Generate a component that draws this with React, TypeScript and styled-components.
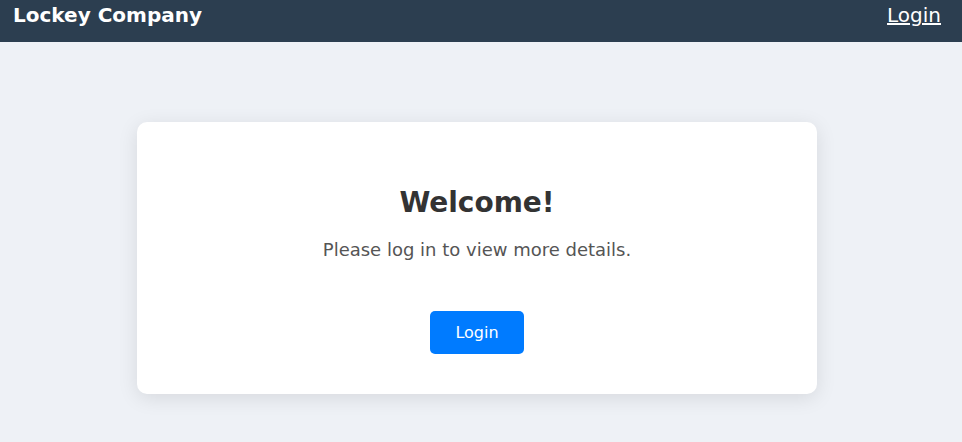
import React from "react";
import styled, { createGlobalStyle } from "styled-components";

const Global = createGlobalStyle`
  html, body { margin: 0; padding: 0; }
  body {
    background: #eef1f6;
    font-family: "DejaVu Sans", sans-serif;
    min-height: 442px;
  }
`;

const Header = styled.header`
  height: 42px;
  box-sizing: border-box;
  background: #2c3e50;
  padding: 3px 21px 0 13px;
  display: flex;
  justify-content: space-between;
  align-items: flex-start;
  color: #fff;
`;

const Brand = styled.div`
  font-size: 20px;
  font-weight: bold;
`;

const NavLink = styled.a`
  font-size: 20px;
  color: #fff;
  text-decoration: underline;
  cursor: pointer;
`;

const Main = styled.main`
  display: flex;
  justify-content: center;
  padding: 80px 8px 0 0;
`;

const Card = styled.section`
  width: 680px;
  height: 272px;
  box-sizing: border-box;
  background: #fff;
  border-radius: 10px;
  box-shadow: 0 4px 20px rgba(0, 0, 0, 0.1);
  padding: 64px 40px 40px;
  display: flex;
  flex-direction: column;
  align-items: center;
  text-align: center;
`;

const Title = styled.h2`
  margin: 0;
  font-size: 28px;
  font-weight: bold;
  color: #333;
`;

const Subtitle = styled.p`
  margin: 20px 0 0;
  font-size: 18px;
  color: #555;
`;

const Button = styled.button`
  margin-top: 51px;
  font-family: "DejaVu Sans", sans-serif;
  font-size: 16px;
  color: #fff;
  background: #007bff;
  border: none;
  border-radius: 5px;
  width: 94px;
  height: 43px;
  cursor: pointer;
`;

export default function App() {
  return (
    <>
      <Global />
      <Header>
        <Brand>Lockey Company</Brand>
        <NavLink>Login</NavLink>
      </Header>
      <Main>
        <Card>
          <Title>Welcome!</Title>
          <Subtitle>Please log in to view more details.</Subtitle>
          <Button>Login</Button>
        </Card>
      </Main>
    </>
  );
}
